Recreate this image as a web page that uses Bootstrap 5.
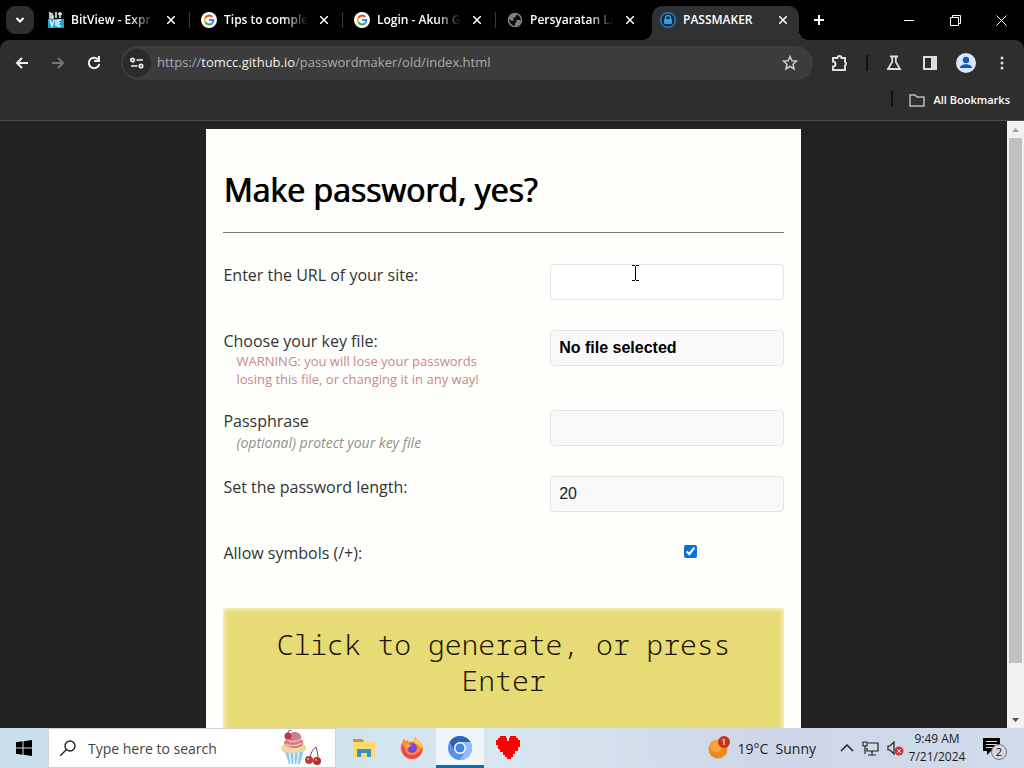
<!DOCTYPE html>
<html lang="en">
<head>
<meta charset="utf-8">
<meta name="viewport" content="width=device-width, initial-scale=1">
<title>PASSMAKER</title>
<link href="https://cdn.jsdelivr.net/npm/bootstrap@5.3.0/dist/css/bootstrap.min.css" rel="stylesheet">
<script src="https://cdn.jsdelivr.net/npm/bootstrap@5.3.0/dist/js/bootstrap.bundle.min.js"></script>
<style>
  body { font-family: "Open Sans", sans-serif; background: #222; }
  button { background: none; border: 0; padding: 0; color: inherit; }
  svg { display: block; flex: none; }
  .ico { display: flex; align-items: center; justify-content: center; flex: none; }

  /* tab strip */
  .strip { height: 40px; background: #000; color: #fff; padding-left: 6px; }
  .tab-search { width: 28px; height: 28px; border-radius: 9px; background: #2e2e2e; margin: 6px 3px 0 0; }
  .tab-item { flex: 0 1 153px; min-width: 0; height: 40px; padding: 0 10px 0 11px; position: relative; gap: 7px; }
  .tab-item.divided::after { content: ""; position: absolute; right: 0; top: 12px; width: 1px; height: 16px; background: #3a3a3a; }
  .tab-title { font-size: 12px; line-height: 16px; font-weight: 600; color: #fff; text-decoration: none; white-space: nowrap; flex: 1 1 0; min-width: 0; }
  .tab-title.fades { -webkit-mask-image: linear-gradient(90deg, #000 70%, transparent); mask-image: linear-gradient(90deg, #000 70%, transparent); }
  .tab-close { width: 18px; height: 18px; }
  .tab-item.current { z-index: 1; }
  .tab-item.current::before { content: ""; position: absolute; z-index: -1; left: 3px; right: 3px; top: 6px; bottom: 0; background: #303132; border-radius: 10px 10px 0 0; }
  .flare { position: absolute; bottom: 0; width: 10px; height: 10px; }
  .flare.start { left: -7px; background: radial-gradient(circle at 0 0, transparent 10px, #303132 10px); }
  .flare.end { right: -7px; background: radial-gradient(circle at 100% 0, transparent 10px, #303132 10px); }
  .new-tab { width: 34px; height: 40px; }
  .win-btn { width: 46px; height: 40px; }

  /* toolbar */
  .chrome-bg { background: #2e2e2e; border-bottom: 1px solid #4e4e4e; border-radius: 9px 9px 0 0; color: #e8e8e8; }
  .chrome-wrap { background: #000; }
  .toolbar { height: 46px; padding: 0 4px; }
  .tool { width: 36px; height: 34px; }
  .omnibox { height: 34px; border-radius: 17px; background: #3c3c3c; padding: 0 15px 0 2px; margin: 0 9px; }
  .site-info { width: 28px; height: 28px; border-radius: 50%; background: #2b2b2b; }
  .url-input { font-size: 13px; color: #aaa; white-space: nowrap; padding-left: 6px; }
  .url-input b { font-weight: 400; color: #f0f0f0; }
  .bar { width: 2px; height: 16px; background: #111; }
  .bookmarks { height: 34px; padding: 1px 14px 0 0; font-size: 11px; line-height: 18px; font-weight: 600; color: #fff; }
  .bookmarks a { color: inherit; text-decoration: none; }

  /* page */
  .sheet { width: 59%; background: #fefffa; margin-top: 8px; padding: 40px 17px; color: #222; }
  .sheet h1 { font-size: 32px; line-height: 42px; font-weight: 400; color: #000; text-shadow: 1px 0 0 #000; margin: 0 0 21px; }
  .sheet hr { margin: 0 0 31px; border-color: #777; opacity: 1; }
  .field { min-height: 66px; padding-bottom: 22px; }
  .field label { font-size: 16px; line-height: 22px; color: #333; display: block; }
  .hint { padding-left: 13px; }
  .warn { font-size: 13px; line-height: 18px; color: #c8868e; }
  .opt { font-size: 14px; line-height: 22px; font-style: italic; color: #909090; }
  .box { height: 36px; padding: 0 8px; border: 1px solid #e4e4e8; border-radius: 4px; background: #f9f9fa; font-family: "Liberation Sans", sans-serif; font-size: 16px; color: #222; }
  .box.active-box { background: #fff; }
  .file-box { font-weight: 700; color: #000; text-align: left; }
  .sheet .tick { width: 13px; height: 13px; margin: 3px 0 0 48px; accent-color: #0b6fde; }
  .generate { background: #e6db74; padding: 18px 24px 60px; font-family: "Noto Sans Mono", "Liberation Mono", monospace; font-size: 28px; line-height: 36px; font-weight: 300; color: #1c1600; box-shadow: inset 0 0 6px #fefffa; }
  .scroller { width: 17px; background: #f1f1f1; }
  .scroller .thumb { width: 13px; background: #c1c1c1; margin-bottom: 48px; }
  .scroller .arrow { height: 17px; width: 17px; flex: none; }
  .ibeam { position: absolute; left: 81px; top: 1px; pointer-events: none; }

  /* taskbar */
  .taskbar { height: 40px; background: linear-gradient(90deg, #c7dfea, #d8e6ef 50%, #cdd6e8 75%, #d0dcea); color: #1d1d1d; flex: none; }
  .start-btn { width: 48px; }
  .search { width: 288px; background: #fff; border: 1px solid #d3d3d3; padding: 0 14px 0 11px; }
  .search input { border: 0; outline: 0; background: none; font-size: 14px; color: #444; min-width: 0; padding: 0 0 0 12px; }
  .search input::placeholder { color: #444; opacity: 1; }
  .task { width: 48px; height: 40px; border-bottom: 3px solid transparent; border-top: 3px solid transparent; }
  .task.running { background: #f0f6fa; border-bottom-color: #0a6cbd; border-top-color: #f0f6fa; }
  .weather { font-size: 14px; gap: 6px; white-space: nowrap; }
  .clock { font-size: 12px; line-height: 18px; width: 58px; text-align: center; white-space: nowrap; }
</style>
</head>
<body>
<div class="d-flex flex-column vh-100 overflow-hidden">

  <header class="flex-shrink-0">
    <div class="strip d-flex">
      <button class="tab-search ico" aria-label="Search tabs"><svg width="10" height="8" fill="none" stroke="#fff" stroke-width="2"><path d="M1.500 2 5 5.500 8.500 2"/></svg></button>

      <div class="tab-item divided d-flex align-items-center">
        <svg width="16" height="16"><rect width="16" height="7" fill="#111"/><rect y="7" width="16" height="9" fill="#18a5dc"/><path d="M2 0v6h3V4H3m2-2H2m6-2v6m4-6v6M10 2h4M2 8l2 6 2-6m2 0v6m5-6h-3v6h3m-3-3h2" stroke="#e6f8ff" stroke-width="1.500" fill="none"/></svg>
        <a class="tab-title fades" href="#">BitView - Expr</a>
        <button class="tab-close ico" aria-label="Close tab"><svg width="8" height="8" stroke="#fff" stroke-width="1.500"><path d="M0 0 8 8M8 0 0 8"/></svg></button>
      </div>
      <div class="tab-item divided d-flex align-items-center">
        <svg width="16" height="16" viewBox="0 0 16 16" fill="none" stroke-width="2"><circle cx="8" cy="8" r="8" fill="#fff"/><path d="M11.200 5A4.300 4.300 0 0 0 4.300 5.800" stroke="#ea4335"/><path d="M4.300 5.800a4.300 4.300 0 0 0 0 4.400" stroke="#fbbc05"/><path d="M4.300 10.200a4.300 4.300 0 0 0 6.600 1.200" stroke="#34a853"/><path d="M10.900 11.400A4.300 4.300 0 0 0 12.300 8H8" stroke="#4285f4"/></svg>
        <a class="tab-title fades" href="#">Tips to comple</a>
        <button class="tab-close ico" aria-label="Close tab"><svg width="8" height="8" stroke="#fff" stroke-width="1.500"><path d="M0 0 8 8M8 0 0 8"/></svg></button>
      </div>
      <div class="tab-item divided d-flex align-items-center">
        <svg width="16" height="16" viewBox="0 0 16 16" fill="none" stroke-width="2"><circle cx="8" cy="8" r="8" fill="#fff"/><path d="M11.200 5A4.300 4.300 0 0 0 4.300 5.800" stroke="#ea4335"/><path d="M4.300 5.800a4.300 4.300 0 0 0 0 4.400" stroke="#fbbc05"/><path d="M4.300 10.200a4.300 4.300 0 0 0 6.600 1.200" stroke="#34a853"/><path d="M10.900 11.400A4.300 4.300 0 0 0 12.300 8H8" stroke="#4285f4"/></svg>
        <a class="tab-title fades" href="#">Login - Akun G</a>
        <button class="tab-close ico" aria-label="Close tab"><svg width="8" height="8" stroke="#fff" stroke-width="1.500"><path d="M0 0 8 8M8 0 0 8"/></svg></button>
      </div>
      <div class="tab-item d-flex align-items-center">
        <svg width="16" height="16" viewBox="0 0 16 16"><circle cx="8" cy="8" r="6.500" fill="#0a0a0a" stroke="#808080" stroke-width="1.500"/><path d="M2 6 5 2h5L8.500 5 6 6l1 2-2 1-3-2zM9 8h4l1 1-2 4-4 1v-3l2-1z" fill="#808080"/></svg>
        <a class="tab-title fades" href="#">Persyaratan La</a>
        <button class="tab-close ico" aria-label="Close tab"><svg width="8" height="8" stroke="#fff" stroke-width="1.500"><path d="M0 0 8 8M8 0 0 8"/></svg></button>
      </div>
      <div class="tab-item current d-flex align-items-center">
        <span class="flare start"></span><span class="flare end"></span>
        <svg width="16" height="16" viewBox="0 0 16 16"><circle cx="8" cy="8" r="7.300" fill="#0c2940" stroke="#1c84c9" stroke-width="1.400"/><rect x="4" y="7" width="8" height="5" rx="1" fill="#3b9be0"/><path d="M5.500 7V6a2.500 2.500 0 0 1 5 0v1" fill="none" stroke="#3b9be0" stroke-width="1.500"/></svg>
        <a class="tab-title" href="#">PASSMAKER</a>
        <button class="tab-close ico" aria-label="Close tab"><svg width="8" height="8" stroke="#fff" stroke-width="1.500"><path d="M0 0 8 8M8 0 0 8"/></svg></button>
      </div>
      <button class="new-tab ico" aria-label="New tab"><svg width="10" height="10" stroke="#fff" stroke-width="2"><path d="M5 0v10M0 5h10"/></svg></button>

      <div class="d-flex ms-auto">
        <button class="win-btn ico" aria-label="Minimize"><svg width="10" height="10" stroke="#fff"><path d="M0 5.500h10"/></svg></button>
        <button class="win-btn ico" aria-label="Restore"><svg width="11" height="11" stroke="#fff" fill="none"><path d="M.5 2.500h8v8h-8zM2.500 2V.5h8v8H9"/></svg></button>
        <button class="win-btn ico" aria-label="Close"><svg width="11" height="11" stroke="#fff"><path d="M.5.5l10 10m0-10-10 10"/></svg></button>
      </div>
    </div>

    <div class="chrome-wrap"><div class="chrome-bg">
      <div class="toolbar d-flex align-items-center">
        <button class="tool ico" aria-label="Back"><svg width="14" height="12" fill="none" stroke="#eee" stroke-width="2"><path d="M13 6H2M7 1 2 6l5 5"/></svg></button>
        <button class="tool ico" aria-label="Forward"><svg width="14" height="12" fill="none" stroke="#777" stroke-width="2"><path d="M1 6h11M7 1l5 5-5 5"/></svg></button>
        <button class="tool ico" aria-label="Reload"><svg width="14" height="14" fill="none" stroke="#eee" stroke-width="2"><path d="M11.500 4A5.300 5.300 0 1 0 12.300 8M12 0v5H7"/></svg></button>
        <div class="omnibox d-flex align-items-center flex-grow-1">
          <button class="site-info ico" aria-label="Site information"><svg width="14" height="12" fill="none" stroke="#eee" stroke-width="1.700"><circle cx="2.500" cy="3" r="1.700"/><path d="M6.500 3H13M1 9h6.500"/><circle cx="11" cy="9" r="1.700"/></svg></button>
          <div class="url-input flex-grow-1" role="textbox" aria-label="Address">https://<b>tomcc.github.io</b>/passwordmaker/old/index.html</div>
          <button class="ico" aria-label="Bookmark"><svg width="16" height="16" viewBox="0 0 16 16" fill="none" stroke="#ccc" stroke-width="1.500"><path d="m8 1.500 2 4.300 4.500.4-3.500 3.100 1.100 4.700L8 11.500 3.900 14 5 9.300 1.500 6.200 6 5.800z"/></svg></button>
        </div>
        <button class="tool ico" aria-label="Extensions"><svg width="18" height="18" viewBox="0 0 18 18" fill="none" stroke="#ddd" stroke-width="2"><path d="M2 4h4.500a2 2 0 0 1 4 0H14v4a2 2 0 0 1 0 3.500V16H2v-3.500a2.300 2.300 0 0 0 0-5z"/></svg></button>
        <span class="bar mx-2"></span>
        <button class="tool ico" aria-label="Labs"><svg width="16" height="16" fill="none" stroke="#ddd" stroke-width="1.800"><path d="M4 1.500h8M6.200 2v5L2 14h12L9.800 7V2"/></svg></button>
        <button class="tool ico" aria-label="Side panel"><svg width="14" height="14"><path d="M1 1h12v12H1z" fill="none" stroke="#ddd" stroke-width="2"/><path d="M8 1h5v12H8z" fill="#ddd"/></svg></button>
        <button class="tool ico" aria-label="Profile"><svg width="20" height="20"><circle cx="10" cy="10" r="10" fill="#d8e6ff"/><circle cx="10" cy="7" r="3.200" fill="#1555c0"/><path d="M4 15c0-5 12-5 12 0z" fill="#1555c0"/></svg></button>
        <button class="tool ico" aria-label="Menu"><svg width="4" height="14" fill="#ddd"><circle cx="2" cy="2" r="1.500"/><circle cx="2" cy="7" r="1.500"/><circle cx="2" cy="12" r="1.500"/></svg></button>
      </div>
      <div class="bookmarks d-flex justify-content-end align-items-start">
        <span class="bar me-3 mt-1"></span>
        <a href="#" class="d-flex align-items-center gap-2 mt-1"><svg width="16" height="13" fill="none" stroke="#bbb" stroke-width="1.500"><path d="M1 1h5l2 2h7v9H1z"/></svg>All Bookmarks</a>
      </div>
    </div></div>
  </header>

  <div class="d-flex flex-grow-1 overflow-hidden">
    <main class="flex-grow-1 overflow-hidden">
      <form class="sheet mx-auto" onsubmit="return false">
        <h1>Make password, yes?</h1>
        <hr>
        <div class="row g-0 field">
          <div class="col-7"><label for="site">Enter the URL of your site:</label></div>
          <div class="col-5 position-relative">
            <input id="site" type="text" class="box active-box w-100">
            <svg class="ibeam" width="9" height="16" fill="none" stroke="#000"><path d="M1 .5h3m1 0h3M1 15.500h3m1 0h3M4.500 1v14"/></svg>
          </div>
        </div>
        <div class="row g-0 field">
          <div class="col-7"><label for="keyfile">Choose your key file:</label>
            <div class="hint warn">WARNING: you will lose your passwords<br>losing this file, or changing it in any way!</div></div>
          <div class="col-5"><button id="keyfile" type="button" class="box file-box w-100">No file selected</button></div>
        </div>
        <div class="row g-0 field">
          <div class="col-7"><label for="phrase">Passphrase</label>
            <div class="hint opt">(optional) protect your key file</div></div>
          <div class="col-5"><input id="phrase" type="password" class="box w-100"></div>
        </div>
        <div class="row g-0 field">
          <div class="col-7"><label for="length">Set the password length:</label></div>
          <div class="col-5"><input id="length" type="text" class="box w-100" value="20"></div>
        </div>
        <div class="row g-0 field">
          <div class="col-7"><label for="symbols">Allow symbols (/+):</label></div>
          <div class="col-5 d-flex justify-content-center align-items-start"><input id="symbols" type="checkbox" class="tick" checked></div>
        </div>
        <button type="submit" class="generate w-100">Click to generate, or press Enter</button>
      </form>
    </main>
    <div class="scroller d-flex flex-column align-items-center flex-shrink-0" aria-hidden="true">
      <span class="arrow ico"><svg width="7" height="4" fill="#a3a3a3"><path d="M0 4 3.500 0 7 4z"/></svg></span>
      <div class="thumb flex-grow-1"></div>
      <span class="arrow ico"><svg width="7" height="4" fill="#505050"><path d="M0 0 3.500 4 7 0z"/></svg></span>
    </div>
  </div>

  <footer class="taskbar d-flex align-items-stretch">
    <button class="start-btn ico" aria-label="Start"><svg width="16" height="16" fill="#000"><path d="M0 2.300 6.500 1.300V7.500H0zM7.500 1.200 16 0v7.500H7.500zM0 8.500h6.500v6.200L0 13.700zM7.500 8.500H16V16l-8.500-1.200z"/></svg></button>
    <div class="search d-flex align-items-center">
      <svg width="16" height="16" fill="none" stroke="#222" stroke-width="1.400"><circle cx="10" cy="6" r="5"/><path d="M6.500 9.500 0 16"/></svg>
      <input class="flex-grow-1" type="text" placeholder="Type here to search" aria-label="Search">
      <svg width="42" height="36" viewBox="0 0 42 36"><path d="M5 19h20l-4 15H10z" fill="#8ccbed"/><path d="M10 20l2 14m3-14v14m5-14-2 14" stroke="#e4f6ff" stroke-width="1.500"/><path d="M2 19c0-4 4-5 5-5h15c4 0 6 3 5 6-4 4-6 0-9 3-3-2-5 2-9-1-3 2-6 0-7-3z" fill="#f0d6a0"/><path d="M5 14c0-4 3-5 3-5 0-5 4-7 8-7 5 0 7 4 6 7 3 2 3 5 1 7-6 3-13 3-18-2z" fill="#cf7d84"/><path d="M8 10c5 3 9 2 14-1M6 14c6 3 12 2 17-1" stroke="#efb5b5" fill="none" stroke-width="1.500"/><circle cx="9" cy="6" r="3.500" fill="#b93b4a"/><path d="M9 3c0-2 2-3 4-3M31 27c1-5 4-9 6-10 1 4 2 7 2 10" stroke="#7a3c35" fill="none"/><circle cx="30" cy="30" r="4" fill="#c43a35"/><circle cx="38" cy="31" r="4" fill="#b72d2d"/><circle cx="29" cy="29" r="1" fill="#f3a39a"/><circle cx="37" cy="30" r="1" fill="#f3a39a"/></svg>
    </div>
    <div class="d-flex ms-1">
      <button class="task ico" aria-label="File Explorer"><svg width="22" height="20"><path d="M0 1h9l2 2v4H0z" fill="#c99a2c"/><path d="M0 4h22v15H0z" fill="#fbdc6c"/><path d="M4 19v-8h14v8h-4v-4H8v4z" fill="#3d8fc6"/></svg></button>
      <button class="task ico" aria-label="Firefox"><svg width="24" height="24" viewBox="0 0 24 24"><path d="M12 23A11 11 0 0 1 2.500 6l1-3 3 2 1-1 1 2c2-1 4-1 6 0-1-3 0-4 1-5 2 4 7 5 7.500 11A11 11 0 0 1 12 23z" fill="#fb8b2c"/><path d="M2 8c-2 9 4 15 10 15 7 0 11-6 10-12-2 6-6 8-10 8-5 0-7-3-7-6z" fill="#f4404e"/><path d="M16 2c2 4 7 5 6 11-2-3-4-5-7-6-1-3 0-4 1-5z" fill="#ffd53f"/><circle cx="12" cy="12" r="5" fill="#7b45d8"/><path d="M5 9c3-2 5-1 7 1-3 0-3 1-4 3-2-1-3-2-3-4z" fill="#ffae35"/></svg></button>
      <button class="task running ico" aria-label="Chromium"><svg width="24" height="24" viewBox="0 0 24 24"><circle cx="12" cy="12" r="12" fill="#5a92ea"/><path d="M1.600 6A12 12 0 0 1 22.400 6H12a6 6 0 0 0-5.200 9z" fill="#2d62c0"/><path d="M22.400 6A12 12 0 0 1 12 24l5.200-9A6 6 0 0 0 12 6z" fill="#94bcfa"/><circle cx="12" cy="12" r="6" fill="#fff"/><circle cx="12" cy="12" r="4.500" fill="#4384e8"/></svg></button>
      <button class="task ico" aria-label="Hearts"><svg width="24" height="24" fill="red" shape-rendering="crispEdges"><path d="M2 2h2V0h6v2h1v3h2V2h1V0h6v2h2v2h2v7h-2v4h-3v3h-2v3h-2v2h-4v-2H9v-2H7v-3H4v-3H2v-4H0V4h2z"/></svg></button>
    </div>
    <div class="d-flex align-items-center ms-auto">
      <a href="#" class="weather d-flex align-items-center text-reset text-decoration-none me-4">
        <svg width="24" height="24"><circle cx="11" cy="13" r="9.500" fill="#f08a1c"/><circle cx="9" cy="10" r="6" fill="#f7a53a"/><circle cx="17" cy="6" r="6" fill="#c8321f"/><path d="M15.500 4.500 17 3v6" stroke="#fff" fill="none"/></svg>
        <span>19°C&nbsp; Sunny</span></a>
      <div class="d-flex align-items-center gap-2 me-1">
        <svg width="14" height="8" fill="none" stroke="#222" stroke-width="1.500"><path d="M1 7l6-6 6 6"/></svg>
        <svg width="17" height="15" fill="none" stroke="#222" stroke-width="1.200"><path d="M6 2h10v8H5V7M10 10v4M6 14h8M1 1h4v4H1zM3 5v8"/></svg>
        <svg width="17" height="15"><path d="M1 5h2l4-4v12L3 9H1z" fill="none" stroke="#222" stroke-width="1.200"/><circle cx="12" cy="10" r="4.500" fill="#d22f38"/><path d="m10 8 4 4m0-4-4 4" stroke="#fff"/></svg>
      </div>
      <div class="clock">9:49 AM<br>7/21/2024</div>
      <button class="ico ms-3 me-3" aria-label="Notifications"><svg width="26" height="26" viewBox="0 0 26 26"><path d="M1 3h17v13H9l-4 4v-4H1z" fill="#000"/><path d="M4 6.500h11M4 9.500h11M4 12.500h8" stroke="#d6dfe9"/><circle cx="17" cy="17" r="7.500" fill="#d4d8de" stroke="#777"/><text x="17" y="21" text-anchor="middle" font-size="11" font-family="Open Sans, sans-serif" fill="#111">2</text></svg></button>
    </div>
  </footer>
</div>
</body>
</html>
